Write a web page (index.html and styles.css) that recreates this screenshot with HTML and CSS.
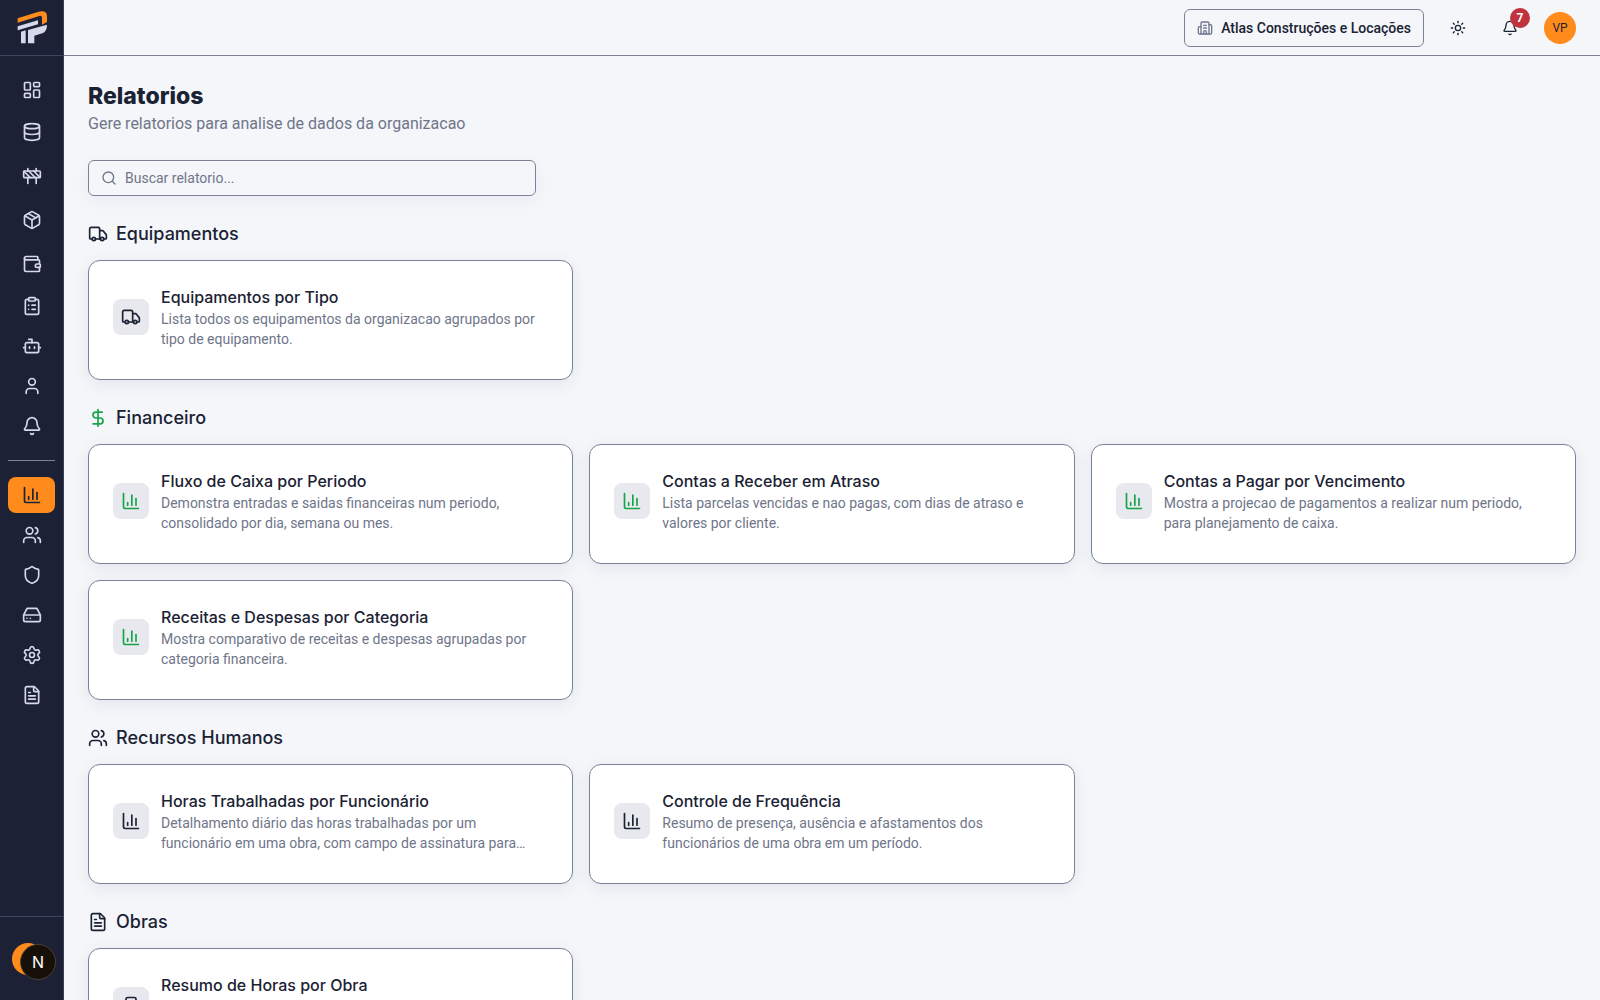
FILE: index.html
```
<!DOCTYPE html>
<html lang="pt-BR">
<head>
    <meta charset="UTF-8">
    <meta name="viewport" content="width=device-width, initial-scale=1.0">
    <title>Relatorios</title>
    <link rel="stylesheet" href="styles.css">
</head>
<body>
    <!-- Icon sprite -->
    <svg class="sprite" aria-hidden="true">
        <symbol id="i-dashboard" viewBox="0 0 24 24"><rect width="7" height="9" x="3" y="3" rx="1"/><rect width="7" height="5" x="14" y="3" rx="1"/><rect width="7" height="9" x="14" y="12" rx="1"/><rect width="7" height="5" x="3" y="16" rx="1"/></symbol>
        <symbol id="i-database" viewBox="0 0 24 24"><ellipse cx="12" cy="5" rx="9" ry="3"/><path d="M3 5V19A9 3 0 0 0 21 19V5"/><path d="M3 12A9 3 0 0 0 21 12"/></symbol>
        <symbol id="i-construction" viewBox="0 0 24 24"><rect x="2" y="6" width="20" height="8" rx="1"/><path d="M17 14v7"/><path d="M7 14v7"/><path d="M17 3v3"/><path d="M7 3v3"/><path d="M10 14 2.3 6.3"/><path d="m14 6 7.7 7.7"/><path d="m8 6 8 8"/></symbol>
        <symbol id="i-package" viewBox="0 0 24 24"><path d="M11 21.73a2 2 0 0 0 2 0l7-4A2 2 0 0 0 21 16V8a2 2 0 0 0-1-1.73l-7-4a2 2 0 0 0-2 0l-7 4A2 2 0 0 0 3 8v8a2 2 0 0 0 1 1.73z"/><path d="M12 22V12"/><path d="M3.29 7 12 12l8.71-5"/><path d="m7.5 4.27 9 5.15"/></symbol>
        <symbol id="i-wallet" viewBox="0 0 24 24"><path d="M19 7V4a1 1 0 0 0-1-1H5a2 2 0 0 0 0 4h15a1 1 0 0 1 1 1v4h-3a2 2 0 0 0 0 4h3a1 1 0 0 0 1-1v-2a1 1 0 0 0-1-1"/><path d="M3 5v14a2 2 0 0 0 2 2h15a1 1 0 0 0 1-1v-4"/></symbol>
        <symbol id="i-clipboard" viewBox="0 0 24 24"><rect width="8" height="4" x="8" y="2" rx="1"/><path d="M16 4h2a2 2 0 0 1 2 2v14a2 2 0 0 1-2 2H6a2 2 0 0 1-2-2V6a2 2 0 0 1 2-2h2"/><path d="M12 11h4"/><path d="M12 16h4"/><path d="M8 11h.01"/><path d="M8 16h.01"/></symbol>
        <symbol id="i-bot" viewBox="0 0 24 24"><path d="M12 8V4H8"/><rect width="16" height="12" x="4" y="8" rx="2"/><path d="M2 14h2"/><path d="M20 14h2"/><path d="M15 13v2"/><path d="M9 13v2"/></symbol>
        <symbol id="i-user" viewBox="0 0 24 24"><path d="M19 21v-2a4 4 0 0 0-4-4H9a4 4 0 0 0-4 4v2"/><circle cx="12" cy="7" r="4"/></symbol>
        <symbol id="i-bell" viewBox="0 0 24 24"><path d="M10.268 21a2 2 0 0 0 3.464 0"/><path d="M3.262 15.326A1 1 0 0 0 4 17h16a1 1 0 0 0 .74-1.673C19.41 13.956 18 12.499 18 8A6 6 0 0 0 6 8c0 4.499-1.411 5.956-2.738 7.326"/></symbol>
        <symbol id="i-chart" viewBox="0 0 24 24"><path d="M3 3v16a2 2 0 0 0 2 2h16"/><path d="M18 17V9"/><path d="M13 17V5"/><path d="M8 17v-3"/></symbol>
        <symbol id="i-users" viewBox="0 0 24 24"><path d="M16 21v-2a4 4 0 0 0-4-4H6a4 4 0 0 0-4 4v2"/><path d="M16 3.128a4 4 0 0 1 0 7.744"/><path d="M22 21v-2a4 4 0 0 0-3-3.87"/><circle cx="9" cy="7" r="4"/></symbol>
        <symbol id="i-shield" viewBox="0 0 24 24"><path d="M20 13c0 5-3.5 7.5-7.66 8.95a1 1 0 0 1-.67-.01C7.5 20.5 4 18 4 13V6a1 1 0 0 1 1-1c2 0 4.5-1.2 6.24-2.72a1.17 1.17 0 0 1 1.52 0C14.51 3.81 17 5 19 5a1 1 0 0 1 1 1z"/></symbol>
        <symbol id="i-drive" viewBox="0 0 24 24"><path d="M10 16h.01"/><path d="M6 16h.01"/><path d="M2.212 11.577a2 2 0 0 0-.212.896V18a2 2 0 0 0 2 2h16a2 2 0 0 0 2-2v-5.527a2 2 0 0 0-.212-.896L18.55 5.11A2 2 0 0 0 16.76 4H7.24a2 2 0 0 0-1.79 1.11z"/><path d="M21.946 12.013H2.054"/></symbol>
        <symbol id="i-settings" viewBox="0 0 24 24"><path d="M9.671 4.136a2.34 2.34 0 0 1 4.659 0 2.34 2.34 0 0 0 3.319 1.915 2.34 2.34 0 0 1 2.33 4.033 2.34 2.34 0 0 0 0 3.831 2.34 2.34 0 0 1-2.33 4.033 2.34 2.34 0 0 0-3.319 1.915 2.34 2.34 0 0 1-4.659 0 2.34 2.34 0 0 0-3.32-1.915 2.34 2.34 0 0 1-2.33-4.033 2.34 2.34 0 0 0 0-3.831A2.34 2.34 0 0 1 6.35 6.051a2.34 2.34 0 0 0 3.319-1.915"/><circle cx="12" cy="12" r="3"/></symbol>
        <symbol id="i-file" viewBox="0 0 24 24"><path d="M6 22a2 2 0 0 1-2-2V4a2 2 0 0 1 2-2h8a2.4 2.4 0 0 1 1.704.706l3.588 3.588A2.4 2.4 0 0 1 20 8v12a2 2 0 0 1-2 2z"/><path d="M14 2v5a1 1 0 0 0 1 1h5"/><path d="M10 9H8"/><path d="M16 13H8"/><path d="M16 17H8"/></symbol>
        <symbol id="i-building" viewBox="0 0 24 24"><path d="M10 12h4"/><path d="M10 8h4"/><path d="M14 21v-3a2 2 0 0 0-4 0v3"/><path d="M6 10H4a2 2 0 0 0-2 2v7a2 2 0 0 0 2 2h16a2 2 0 0 0 2-2V9a2 2 0 0 0-2-2h-2"/><path d="M6 21V5a2 2 0 0 1 2-2h8a2 2 0 0 1 2 2v16"/></symbol>
        <symbol id="i-sun" viewBox="0 0 24 24"><circle cx="12" cy="12" r="4"/><path d="M12 2v2"/><path d="M12 20v2"/><path d="m4.93 4.93 1.41 1.41"/><path d="m17.66 17.66 1.41 1.41"/><path d="M2 12h2"/><path d="M20 12h2"/><path d="m6.34 17.66-1.41 1.41"/><path d="m19.07 4.93-1.41 1.41"/></symbol>
        <symbol id="i-search" viewBox="0 0 24 24"><path d="m21 21-4.34-4.34"/><circle cx="11" cy="11" r="8"/></symbol>
        <symbol id="i-truck" viewBox="0 0 24 24"><path d="M14 18V6a2 2 0 0 0-2-2H4a2 2 0 0 0-2 2v11a1 1 0 0 0 1 1h2"/><path d="M15 18H9"/><path d="M19 18h2a1 1 0 0 0 1-1v-3.65a1 1 0 0 0-.22-.624l-3.48-4.35A1 1 0 0 0 17.52 8H14"/><circle cx="17" cy="18" r="2"/><circle cx="7" cy="18" r="2"/></symbol>
        <symbol id="i-dollar" viewBox="0 0 24 24"><path d="M12 2v20"/><path d="M17 5H9.5a3.5 3.5 0 0 0 0 7h5a3.5 3.5 0 0 1 0 7H6"/></symbol>
    </svg>

    <div class="app">
        <aside class="sidebar">
            <a class="brand" href="#" aria-label="Inicio">
                <svg class="logo" viewBox="0 0 90 99">
                    <path fill="#ff8b1c" d="M2 22 65 2Q89-4 90 14V33L75 41V20Q75 13 67 15L2 35Z"/>
                    <path fill="#d5d9ea" d="M2 46 63 28V40L2 58ZM12 62 26 58V97H12ZM33 57 90 41Q90 62 76 67L52 74V97H33Z"/>
                </svg>
            </a>
            <nav class="nav">
                <a class="nav-item" href="#" aria-label="Dashboard"><svg class="icon"><use href="#i-dashboard"/></svg></a>
                <button class="nav-item nav-group" aria-label="Cadastros"><svg class="icon"><use href="#i-database"/></svg></button>
                <button class="nav-item nav-group" aria-label="Obras"><svg class="icon"><use href="#i-construction"/></svg></button>
                <button class="nav-item nav-group" aria-label="Estoque"><svg class="icon"><use href="#i-package"/></svg></button>
                <button class="nav-item nav-group" aria-label="Financeiro"><svg class="icon"><use href="#i-wallet"/></svg></button>
                <a class="nav-item" href="#" aria-label="Tarefas"><svg class="icon"><use href="#i-clipboard"/></svg></a>
                <a class="nav-item" href="#" aria-label="Assistente"><svg class="icon"><use href="#i-bot"/></svg></a>
                <a class="nav-item" href="#" aria-label="Perfil"><svg class="icon"><use href="#i-user"/></svg></a>
                <a class="nav-item" href="#" aria-label="Notificacoes"><svg class="icon"><use href="#i-bell"/></svg></a>
                <hr class="nav-divider">
                <a class="nav-item active" href="#" aria-label="Relatorios"><svg class="icon"><use href="#i-chart"/></svg></a>
                <a class="nav-item" href="#" aria-label="Usuarios"><svg class="icon"><use href="#i-users"/></svg></a>
                <a class="nav-item" href="#" aria-label="Permissoes"><svg class="icon"><use href="#i-shield"/></svg></a>
                <a class="nav-item" href="#" aria-label="Armazenamento"><svg class="icon"><use href="#i-drive"/></svg></a>
                <a class="nav-item" href="#" aria-label="Configuracoes"><svg class="icon"><use href="#i-settings"/></svg></a>
                <a class="nav-item" href="#" aria-label="Documentos"><svg class="icon"><use href="#i-file"/></svg></a>
            </nav>
            <div class="sidebar-footer">
                <button class="avatar" aria-label="Conta"></button>
            </div>
        </aside>

        <div class="page">
            <header class="topbar">
                <button class="org-btn"><svg class="icon icon-sm"><use href="#i-building"/></svg>Atlas Construções e Locações</button>
                <button class="icon-btn" aria-label="Tema"><svg class="icon icon-sm"><use href="#i-sun"/></svg></button>
                <button class="icon-btn" aria-label="Notificacoes"><svg class="icon icon-sm"><use href="#i-bell"/></svg><span class="badge">7</span></button>
                <button class="avatar">VP</button>
            </header>

            <main class="content">
                <div class="heading">
                    <h1>Relatorios</h1>
                    <p>Gere relatorios para analise de dados da organizacao</p>
                </div>

                <label class="search">
                    <svg class="icon icon-sm"><use href="#i-search"/></svg>
                    <input type="text" placeholder="Buscar relatorio..." aria-label="Buscar relatorio">
                </label>

                <section>
                    <h2><svg class="icon"><use href="#i-truck"/></svg>Equipamentos</h2>
                    <div class="grid">
                        <a class="card" href="#">
                            <span class="card-icon"><svg class="icon"><use href="#i-truck"/></svg></span>
                            <div class="card-text">
                                <h3>Equipamentos por Tipo</h3>
                                <p>Lista todos os equipamentos da organizacao agrupados por tipo de equipamento.</p>
                            </div>
                        </a>
                    </div>
                </section>

                <section>
                    <h2><svg class="icon green"><use href="#i-dollar"/></svg>Financeiro</h2>
                    <div class="grid">
                        <a class="card" href="#">
                            <span class="card-icon green"><svg class="icon"><use href="#i-chart"/></svg></span>
                            <div class="card-text">
                                <h3>Fluxo de Caixa por Periodo</h3>
                                <p>Demonstra entradas e saidas financeiras num periodo, consolidado por dia, semana ou mes.</p>
                            </div>
                        </a>
                        <a class="card" href="#">
                            <span class="card-icon green"><svg class="icon"><use href="#i-chart"/></svg></span>
                            <div class="card-text">
                                <h3>Contas a Receber em Atraso</h3>
                                <p>Lista parcelas vencidas e nao pagas, com dias de atraso e valores por cliente.</p>
                            </div>
                        </a>
                        <a class="card" href="#">
                            <span class="card-icon green"><svg class="icon"><use href="#i-chart"/></svg></span>
                            <div class="card-text">
                                <h3>Contas a Pagar por Vencimento</h3>
                                <p>Mostra a projecao de pagamentos a realizar num periodo, para planejamento de caixa.</p>
                            </div>
                        </a>
                        <a class="card" href="#">
                            <span class="card-icon green"><svg class="icon"><use href="#i-chart"/></svg></span>
                            <div class="card-text">
                                <h3>Receitas e Despesas por Categoria</h3>
                                <p>Mostra comparativo de receitas e despesas agrupadas por categoria financeira.</p>
                            </div>
                        </a>
                    </div>
                </section>

                <section>
                    <h2><svg class="icon"><use href="#i-users"/></svg>Recursos Humanos</h2>
                    <div class="grid">
                        <a class="card" href="#">
                            <span class="card-icon"><svg class="icon"><use href="#i-chart"/></svg></span>
                            <div class="card-text">
                                <h3>Horas Trabalhadas por Funcionário</h3>
                                <p>Detalhamento diário das horas trabalhadas por um<br>funcionário em uma obra, com campo de assinatura para…</p>
                            </div>
                        </a>
                        <a class="card" href="#">
                            <span class="card-icon"><svg class="icon"><use href="#i-chart"/></svg></span>
                            <div class="card-text">
                                <h3>Controle de Frequência</h3>
                                <p>Resumo de presença, ausência e afastamentos dos funcionários de uma obra em um período.</p>
                            </div>
                        </a>
                    </div>
                </section>

                <section>
                    <h2><svg class="icon"><use href="#i-file"/></svg>Obras</h2>
                    <div class="grid">
                        <a class="card" href="#">
                            <span class="card-icon"><svg class="icon"><use href="#i-building"/></svg></span>
                            <div class="card-text">
                                <h3>Resumo de Horas por Obra</h3>
                            </div>
                        </a>
                    </div>
                </section>
            </main>
        </div>
    </div>

    <button class="dev-badge" aria-label="Dev tools">N</button>
</body>
</html>
```
FILE: styles.css
```
* { box-sizing: border-box; }
body { margin: 0; font-family: Roboto, sans-serif; font-size: 14px; line-height: 20px; color: #1a2233; background: #f4f6fa; }
h1, h2, h3, p { margin: 0; }
a { color: inherit; text-decoration: none; }
button { border: none; background: none; padding: 0; font: inherit; color: inherit; cursor: pointer; }
.sprite { position: absolute; width: 0; height: 0; }
.icon { width: 20px; height: 20px; flex: none; fill: none; stroke: currentColor; stroke-width: 2; stroke-linecap: round; stroke-linejoin: round; }
.icon-sm { width: 16px; height: 16px; }
.green { color: #16a34a; }

.app { display: flex; height: 100vh; }

/* Sidebar */
.sidebar { display: flex; flex-direction: column; width: 64px; flex: none; background: #1d2135; color: #d5d9ea; border-right: 1px solid #3a3f55; }
.brand { display: flex; align-items: center; justify-content: center; height: 56px; border-bottom: 1px solid #3f455c; }
.logo { width: 30px; height: 33px; }
.nav { flex: 1; display: flex; flex-direction: column; gap: 4px; padding: 16px 8px; }
.nav-item { display: flex; align-items: center; justify-content: center; height: 36px; border-radius: 8px; }
.nav-group { height: 40px; }
.nav-item:hover { background: #2b3048; }
.nav-item.active { background: #ff8b1c; color: #1d2135; }
.nav-divider { width: 100%; height: 1px; margin: 12px 0; border: none; background: #7f8598; }
.sidebar-footer { display: flex; align-items: center; height: 84px; padding: 0 12px; border-top: 1px solid #3f455c; }

.avatar { width: 32px; height: 32px; flex: none; border-radius: 50%; background: #ff8b1c; color: #1d2135; font-size: 12px; }
.dev-badge { position: fixed; left: 20px; bottom: 20px; width: 36px; height: 36px; border: 1px solid #4a4136; border-radius: 50%; background: #171008; color: #fff; font-family: Inter, sans-serif; font-size: 16px; }

/* Top bar */
.page { flex: 1; min-width: 0; display: flex; flex-direction: column; }
.topbar { display: flex; align-items: center; justify-content: flex-end; gap: 16px; height: 56px; flex: none; padding: 0 24px; border-bottom: 1px solid #7b8196; }
.org-btn { display: flex; align-items: center; gap: 8px; height: 38px; padding: 0 12px; border: 1px solid #7b8196; border-radius: 6px; font-weight: 500; }
.org-btn .icon { color: #6f7690; }
.icon-btn { position: relative; display: flex; align-items: center; justify-content: center; width: 36px; height: 36px; }
.badge { position: absolute; top: -2px; right: -2px; width: 20px; height: 20px; border-radius: 50%; background: #c0323e; color: #fff; font-size: 12px; font-weight: 700; }

/* Content */
.content { flex: 1; display: flex; flex-direction: column; gap: 24px; padding: 24px; overflow-y: auto; scrollbar-width: none; }
.heading h1 { font-family: Inter, sans-serif; font-size: 23px; line-height: 32px; font-weight: 800; }
.heading p { font-size: 16px; line-height: 24px; color: #6f7589; }
.search { display: flex; align-items: center; gap: 8px; width: 100%; max-width: 448px; height: 36px; flex: none; padding: 0 12px; border: 1px solid #7b8196; border-radius: 6px; color: #6f7589; box-shadow: 0 4px 16px rgba(29, 33, 53, 0.05); }
.search input { flex: 1; min-width: 0; border: none; outline: none; padding: 0; background: none; font: inherit; color: #1a2233; }
.search input::placeholder { color: #6f7589; opacity: 1; }

section h2 { display: flex; align-items: center; gap: 8px; margin-bottom: 12px; font-family: Inter, sans-serif; font-size: 18px; line-height: 28px; font-weight: 500; }
.grid { display: grid; grid-template-columns: repeat(3, 1fr); gap: 16px; }
.card { display: flex; align-items: center; gap: 12px; padding: 24px 24px 30px; background: #fff; border: 1px solid #7b8196; border-radius: 12px; box-shadow: 0 4px 16px rgba(29, 33, 53, 0.08); }
.card-icon { display: flex; align-items: center; justify-content: center; width: 36px; height: 36px; flex: none; border-radius: 8px; background: #e8e9ef; }
.card-text { min-width: 0; min-height: 64px; }
.card h3 { font-family: Inter, sans-serif; font-size: 16px; line-height: 24px; font-weight: 500; }
.card p { color: #6f7589; display: -webkit-box; -webkit-box-orient: vertical; -webkit-line-clamp: 2; overflow: hidden; }
```
